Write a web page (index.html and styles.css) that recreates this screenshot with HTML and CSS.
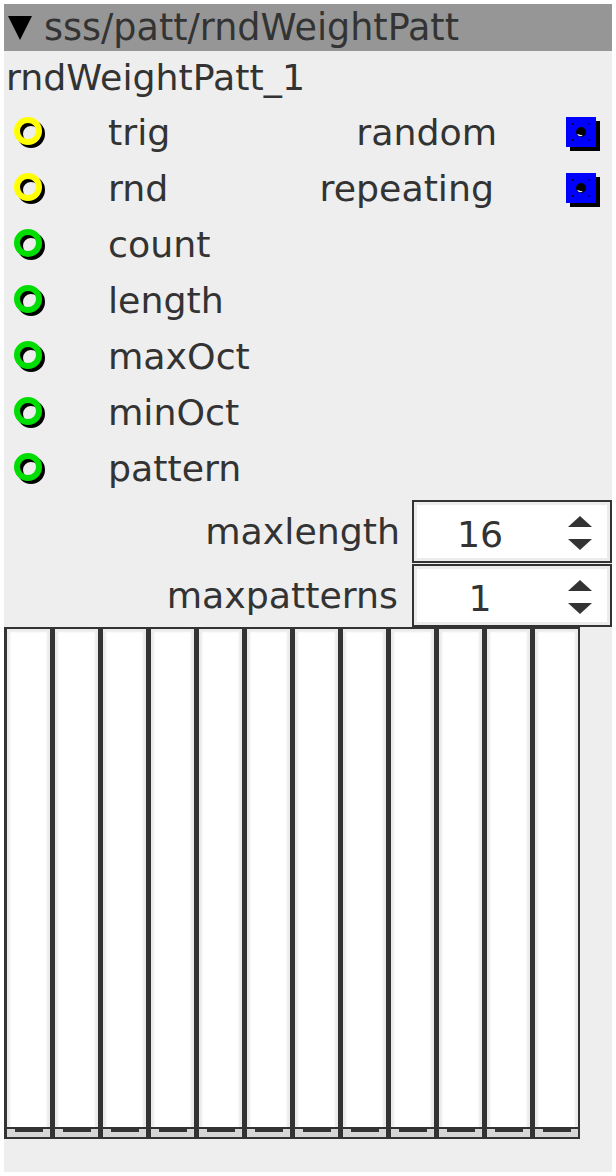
FILE: index.html
```html
<!DOCTYPE html>
<html>
<head>
<meta charset="utf-8">
<link rel="stylesheet" href="styles.css">
</head>
<body>
<div class="panel">
  <div class="header">
    <svg class="tri" width="24" height="24" viewBox="0 0 24 24"><polygon points="0,0 24,0 12,24" fill="#000"/></svg>
    <span class="title">sss/patt/rndWeightPatt</span>
  </div>
  <div class="name">rndWeightPatt_1</div>

  <div class="row">
    <div class="port"><svg width="44" height="44" viewBox="0 0 44 44"><circle cx="17" cy="24" r="11" fill="none" stroke="#000" stroke-width="6"/><circle cx="14" cy="21" r="11" fill="none" stroke="#ffff00" stroke-width="6"/></svg></div>
    <div class="label">trig</div>
    <div class="rlabel">random</div>
    <div class="check"><svg width="36" height="40" viewBox="0 0 36 40"><rect x="4" y="9" width="30" height="30" fill="#000"/><rect x="0" y="5" width="30" height="30" fill="#0000ff"/><circle cx="15" cy="20" r="5" fill="#000"/><path d="M11 22 A4.5 4.5 0 0 0 17 23.5 Z" fill="#fff"/><rect x="6" y="11" width="1.5" height="1.5" fill="#000"/><rect x="22.5" y="11" width="1.5" height="1.5" fill="#000"/><rect x="6" y="27.5" width="1.5" height="1.5" fill="#000"/><rect x="22.5" y="27.5" width="1.5" height="1.5" fill="#000"/></svg></div>
  </div>
  <div class="row">
    <div class="port"><svg width="44" height="44" viewBox="0 0 44 44"><circle cx="17" cy="24" r="11" fill="none" stroke="#000" stroke-width="6"/><circle cx="14" cy="21" r="11" fill="none" stroke="#ffff00" stroke-width="6"/></svg></div>
    <div class="label">rnd</div>
    <div class="rlabel rep">repeating</div>
    <div class="check"><svg width="36" height="40" viewBox="0 0 36 40"><rect x="4" y="9" width="30" height="30" fill="#000"/><rect x="0" y="5" width="30" height="30" fill="#0000ff"/><circle cx="15" cy="20" r="5" fill="#000"/><path d="M11 22 A4.5 4.5 0 0 0 17 23.5 Z" fill="#fff"/><rect x="6" y="11" width="1.5" height="1.5" fill="#000"/><rect x="22.5" y="11" width="1.5" height="1.5" fill="#000"/><rect x="6" y="27.5" width="1.5" height="1.5" fill="#000"/><rect x="22.5" y="27.5" width="1.5" height="1.5" fill="#000"/></svg></div>
  </div>
  <div class="row">
    <div class="port"><svg width="44" height="44" viewBox="0 0 44 44"><circle cx="17" cy="24" r="11" fill="none" stroke="#000" stroke-width="6"/><circle cx="14" cy="21" r="11" fill="none" stroke="#00dd00" stroke-width="6"/></svg></div>
    <div class="label">count</div>
  </div>
  <div class="row">
    <div class="port"><svg width="44" height="44" viewBox="0 0 44 44"><circle cx="17" cy="24" r="11" fill="none" stroke="#000" stroke-width="6"/><circle cx="14" cy="21" r="11" fill="none" stroke="#00dd00" stroke-width="6"/></svg></div>
    <div class="label">length</div>
  </div>
  <div class="row">
    <div class="port"><svg width="44" height="44" viewBox="0 0 44 44"><circle cx="17" cy="24" r="11" fill="none" stroke="#000" stroke-width="6"/><circle cx="14" cy="21" r="11" fill="none" stroke="#00dd00" stroke-width="6"/></svg></div>
    <div class="label">maxOct</div>
  </div>
  <div class="row">
    <div class="port"><svg width="44" height="44" viewBox="0 0 44 44"><circle cx="17" cy="24" r="11" fill="none" stroke="#000" stroke-width="6"/><circle cx="14" cy="21" r="11" fill="none" stroke="#00dd00" stroke-width="6"/></svg></div>
    <div class="label">minOct</div>
  </div>
  <div class="row">
    <div class="port"><svg width="44" height="44" viewBox="0 0 44 44"><circle cx="17" cy="24" r="11" fill="none" stroke="#000" stroke-width="6"/><circle cx="14" cy="21" r="11" fill="none" stroke="#00dd00" stroke-width="6"/></svg></div>
    <div class="label">pattern</div>
  </div>

  <div class="spins">
    <div class="spin">
      <div class="slabel">maxlength</div>
      <div class="box">
        <div class="val">16</div>
        <div class="arrows"><svg width="24" height="34" viewBox="0 0 24 34"><polygon points="12,0 24,11 0,11" fill="#333"/><polygon points="0,23 24,23 12,34" fill="#333"/></svg></div>
      </div>
    </div>
    <div class="spin">
      <div class="slabel mp">maxpatterns</div>
      <div class="box">
        <div class="val">1</div>
        <div class="arrows"><svg width="24" height="34" viewBox="0 0 24 34"><polygon points="12,0 24,11 0,11" fill="#333"/><polygon points="0,23 24,23 12,34" fill="#333"/></svg></div>
      </div>
    </div>
  </div>

  <div class="bars">
    <div class="bar"><div class="knob"><span></span></div></div>
    <div class="bar"><div class="knob"><span></span></div></div>
    <div class="bar"><div class="knob"><span></span></div></div>
    <div class="bar"><div class="knob"><span></span></div></div>
    <div class="bar"><div class="knob"><span></span></div></div>
    <div class="bar"><div class="knob"><span></span></div></div>
    <div class="bar"><div class="knob"><span></span></div></div>
    <div class="bar"><div class="knob"><span></span></div></div>
    <div class="bar"><div class="knob"><span></span></div></div>
    <div class="bar"><div class="knob"><span></span></div></div>
    <div class="bar"><div class="knob"><span></span></div></div>
    <div class="bar"><div class="knob"><span></span></div></div>
  </div>
</div>
</body>
</html>
```

FILE: styles.css
```css
html, body {
  margin: 0;
  padding: 0;
  background: #ffffff;
}
body {
  padding: 4px;
  font-family: "DejaVu Sans", sans-serif;
  color: #333333;
}
.panel {
  width: 608px;
  height: 1168px;
  background: #eeeeee;
  display: flex;
  flex-direction: column;
}
.header {
  height: 47px;
  background: #969696;
  display: flex;
  align-items: center;
}
.tri {
  margin-left: 4px;
  margin-right: 12px;
  flex: none;
}
.title {
  font-size: 36.5px;
  line-height: 47px;
  color: #333333;
  white-space: nowrap;
}
.name {
  height: 53px;
  line-height: 53px;
  font-size: 36.3px;
  padding-left: 2px;
}
.row {
  height: 56px;
  display: flex;
  align-items: center;
  font-size: 36.3px;
}
.port {
  width: 104px;
  flex: none;
  display: flex;
  align-items: center;
}
.port svg {
  margin-left: 10px;
  display: block;
}
.label {
  flex: 1;
  white-space: nowrap;
}
.rlabel {
  white-space: nowrap;
  text-align: right;
}
.rlabel.rep {
  margin-right: 3px;
}
.check {
  width: 115px;
  flex: none;
  display: flex;
  align-items: center;
}
.check svg {
  margin-left: 69px;
  display: block;
}
.spins {
  padding-top: 4px;
  display: flex;
  flex-direction: column;
  gap: 1px;
}
.spin {
  height: 63px;
  display: flex;
  align-items: center;
  justify-content: flex-end;
  font-size: 36.3px;
}
.slabel {
  margin-right: 12px;
  white-space: nowrap;
}
.slabel.mp {
  margin-right: 14px;
}
.box {
  width: 200px;
  height: 63px;
  box-sizing: border-box;
  border: 2px solid #333333;
  background: #ffffff;
  box-shadow: inset 0 0 0 3px #ececec;
  display: flex;
  align-items: center;
}
.val {
  width: 132px;
  text-align: center;
  font-size: 36.3px;
  margin-top: 6px;
}
.arrows {
  margin-left: 22px;
  display: flex;
}
.arrows svg {
  display: block;
  margin-top: 2px;
}
.bars {
  display: flex;
  height: 512px;
}
.bar {
  width: 48px;
  height: 512px;
  box-sizing: border-box;
  border: 2px solid #333333;
  border-left-width: 3px;
  background: #ffffff;
  box-shadow: inset 3px 3px 2px #ebebeb, inset -3px 0 2px #ebebeb;
  display: flex;
  flex-direction: column;
  justify-content: flex-end;
}
.knob {
  height: 8px;
  border-top: 2px solid #333333;
  background: #d6d6d6;
  display: flex;
  justify-content: center;
}
.knob span {
  width: 28px;
  height: 3px;
  background: #333333;
}
```
